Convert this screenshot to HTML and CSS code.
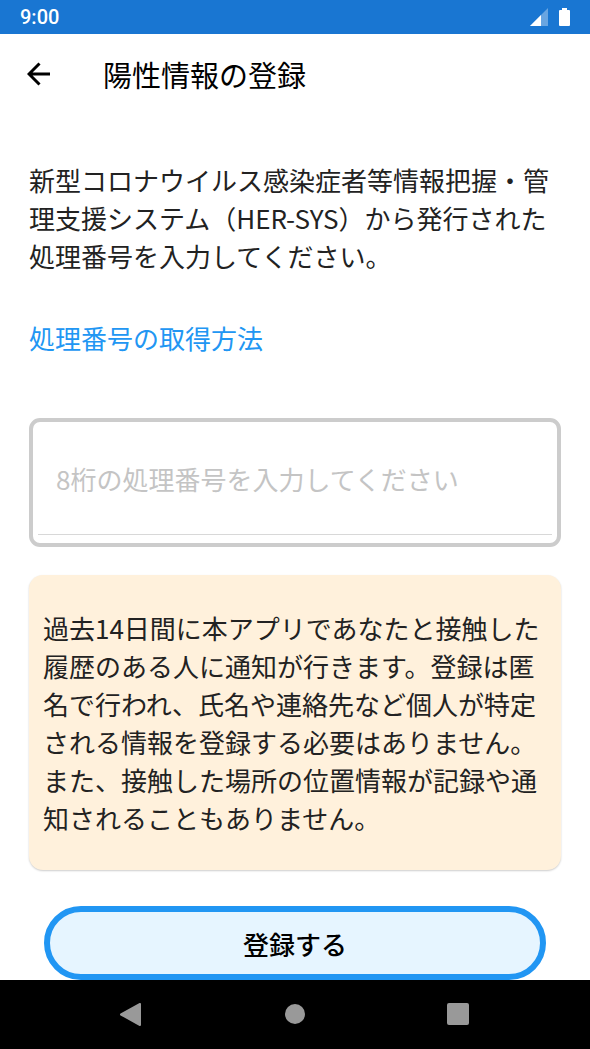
FILE: index.html
```
<!DOCTYPE html>
<html lang="ja">
<head>
  <meta charset="UTF-8">
  <meta name="viewport" content="width=device-width, initial-scale=1.0">
  <title>陽性情報の登録</title>
  <link rel="stylesheet" href="styles.css">
</head>
<body>
  <!-- ステータスバー -->
  <div class="status-bar">
    <span class="time">9:00</span>
    <div class="status-icons">
      <svg width="18" height="18" viewBox="0 0 18 18" aria-hidden="true">
        <path d="M18 0V18H0Z" fill="#fff" fill-opacity="0.35"/>
        <path d="M11 7V18H0Z" fill="#fff"/>
      </svg>
      <svg width="11" height="18" viewBox="0 0 11 18" aria-hidden="true">
        <path d="M3 0h5v2h2q1 0 1 1v14q0 1-1 1H1q-1 0-1-1V3q0-1 1-1h2z" fill="#fff"/>
      </svg>
    </div>
  </div>

  <header class="app-bar">
    <button type="button" class="back-btn" aria-label="戻る">
      <svg width="24" height="24" viewBox="0 0 24 24" fill="none" stroke="#000" stroke-width="3">
        <path d="M23 12H2M12.500 1.500L2 12L12.500 22.500"/>
      </svg>
    </button>
    <h1>陽性情報の登録</h1>
  </header>

  <main>
    <p>新型コロナウイルス感染症者等情報把握・管理支援システム（HER-SYS）から発行された処理番号を入力してください。</p>
    <a class="help-link" href="#">処理番号の取得方法</a>

    <form class="register-form">
      <div class="number-box">
        <input type="text" inputmode="numeric" maxlength="8" aria-label="処理番号" placeholder="8桁の処理番号を入力してください">
      </div>
      <div class="notice">
        <p>過去14日間に本アプリであなたと接触した履歴のある人に通知が行きます。登録は匿名で行われ、氏名や連絡先など個人が特定される情報を登録する必要はありません。また、接触した場所の位置情報が記録や通知されることもありません。</p>
      </div>
      <button type="submit" class="submit-btn">登録する</button>
    </form>
  </main>

  <!-- ナビゲーションバー -->
  <nav class="nav-bar">
    <button type="button" aria-label="戻る">
      <svg width="24" height="24" viewBox="0 0 24 24"><path d="M21 1V22L2 11.500Z" fill="#999" stroke="#999" stroke-width="2" stroke-linejoin="round"/></svg>
    </button>
    <button type="button" aria-label="ホーム">
      <svg width="24" height="24" viewBox="0 0 24 24"><circle cx="12" cy="11" r="10" fill="#999"/></svg>
    </button>
    <button type="button" aria-label="履歴">
      <svg width="24" height="24" viewBox="0 0 24 24"><rect x="0" y="0" width="22" height="22" rx="2" fill="#999"/></svg>
    </button>
  </nav>
</body>
</html>
```
FILE: styles.css
```
* {
  box-sizing: border-box;
}
body {
  font-family: 'Noto Sans CJK JP', sans-serif;
  font-size: 26px;
  line-height: 38px;
  margin: 0;
  min-height: 100vh;
  display: flex;
  flex-direction: column;
  background-color: #fff;
  color: #222;
}
h1, p {
  margin: 0;
  font-weight: 400;
}
button {
  font-family: inherit;
  border: none;
  background: none;
  padding: 0;
  cursor: pointer;
}
svg {
  display: block;
}

.status-bar {
  height: 34px;
  padding: 0 20px;
  display: flex;
  align-items: center;
  justify-content: space-between;
  background-color: #1976d2;
  color: #fff;
}
.time {
  font-family: Roboto, sans-serif;
  font-size: 20px;
  font-weight: 500;
}
.status-icons {
  display: flex;
  gap: 11px;
}

.app-bar {
  height: 79px;
  padding: 0 27px;
  display: flex;
  align-items: center;
  gap: 52px;
}
.app-bar h1 {
  font-size: 29px;
  color: #000;
}

main {
  flex: 1;
  padding: 48px 29px 0;
}
.help-link {
  display: block;
  width: fit-content;
  margin: 44px 0 61px;
  color: #2196f3;
  text-decoration: none;
}

.number-box {
  height: 129px;
  border: 4px solid #ccc;
  border-radius: 11px;
  padding: 0 5px 8px;
}
.number-box input {
  width: 100%;
  height: 100%;
  border: none;
  border-bottom: 1px solid #d8d8d8;
  padding: 0 18px;
  font-family: inherit;
  font-size: 26px;
  color: #222;
  background: none;
  outline: none;
}
.number-box input::placeholder {
  color: #c4c4c4;
  opacity: 1;
}

.notice {
  margin: 28px 0 36px;
  padding: 34px 14px 33px;
  border-radius: 14px;
  background-color: #fff1dc;
  box-shadow: 0 1px 2px rgba(0, 0, 0, 0.2);
}

.submit-btn {
  display: block;
  width: calc(100% - 30px);
  height: 74px;
  margin: 0 auto;
  border: 6px solid #2196f3;
  border-radius: 37px;
  background-color: #e6f5ff;
  color: #000;
  font-size: 26px;
  font-weight: 500;
}

.nav-bar {
  height: 69px;
  padding: 0 49px;
  display: flex;
  align-items: center;
  background-color: #000;
}
.nav-bar button {
  flex: 1;
  display: flex;
  justify-content: center;
}
```
